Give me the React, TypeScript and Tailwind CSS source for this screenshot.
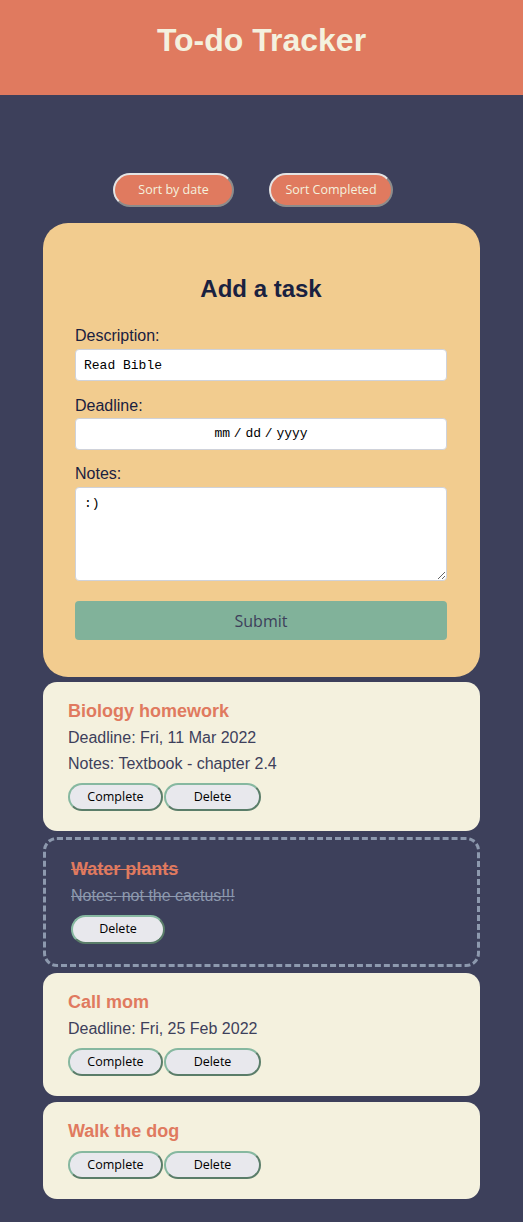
import React from "react";

type Task = {
  title: string;
  deadline?: string;
  notes?: string;
  done?: boolean;
};

const tasks: Task[] = [
  { title: "Biology homework", deadline: "Fri, 11 Mar 2022", notes: "Textbook - chapter 2.4" },
  { title: "Water plants", notes: "not the cactus!!!", done: true },
  { title: "Call mom", deadline: "Fri, 25 Feb 2022" },
  { title: "Walk the dog" },
];

const sans = "font-['Liberation_Sans',Arial,sans-serif]";
const ui = "font-['Open_Sans','Noto_Sans',sans-serif]";

const TaskButton = ({ label, w }: { label: string; w: string }) => (
  <button
    className={`${ui} ${w} rounded-full bg-[#e8e8ed] text-[12.5px] text-black border-2 border-t-[#86b8a0] border-l-[#86b8a0] border-b-[#5a7d69] border-r-[#5a7d69]`}
  >
    {label}
  </button>
);

const TaskCard = ({ task }: { task: Task }) => {
  if (task.done) {
    return (
      <div className="flex flex-col rounded-[14px] border-[3px] border-dashed border-[#8d99ae] px-[25px] pt-[18px] pb-[20px]">
        <h3 className={`${sans} text-[18px] leading-[22px] font-bold text-[#e07a5f] line-through mb-[3px]`}>
          {task.title}
        </h3>
        {task.notes && (
          <p className={`${sans} text-[16px] leading-[26px] text-[#8d99ae] line-through`}>
            Notes: {task.notes}
          </p>
        )}
        <div className="mt-[6px] flex">
          <TaskButton label="Delete" w="w-[94px] h-[29px]" />
        </div>
      </div>
    );
  }
  return (
    <div className="flex flex-col rounded-[14px] bg-[#f4f1de] px-[25px] pt-[18px] pb-[20px]">
      <h3 className={`${sans} text-[18px] leading-[22px] font-bold text-[#e07a5f] mb-[3px]`}>
        {task.title}
      </h3>
      {task.deadline && (
        <p className={`${sans} text-[16px] leading-[26px] text-[#3d405b]`}>
          Deadline: {task.deadline}
        </p>
      )}
      {task.notes && (
        <p className={`${sans} text-[16px] leading-[26px] text-[#3d405b]`}>
          Notes: {task.notes}
        </p>
      )}
      <div className="mt-[6px] flex gap-[1px]">
        <TaskButton label="Complete" w="w-[95px] h-[28px]" />
        <TaskButton label="Delete" w="w-[97px] h-[28px]" />
      </div>
    </div>
  );
};

export default function App() {
  return (
    <div className="min-h-[1222px] bg-[#3d405b] pb-[22px]">
      <header className="h-[95px] bg-[#e07a5f] flex justify-center pt-[21px]">
        <h1 className={`${sans} text-[32px] leading-[38px] font-bold text-[#f4f1de]`}>To-do Tracker</h1>
      </header>

      <div className="flex justify-center gap-[35px] pr-[17px] mt-[78px]">
        <button
          className={`${ui} w-[121px] h-[34px] rounded-full bg-[#e07a5f] text-[12.5px] text-[#f4f1de] border-2 border-t-[#e4e4e4] border-l-[#e4e4e4] border-b-[#8c8c8c] border-r-[#8c8c8c]`}
        >
          Sort by date
        </button>
        <button
          className={`${ui} w-[124px] h-[34px] rounded-full bg-[#e07a5f] text-[12.5px] text-[#f4f1de] border-2 border-t-[#e4e4e4] border-l-[#e4e4e4] border-b-[#8c8c8c] border-r-[#8c8c8c]`}
        >
          Sort Completed
        </button>
      </div>

      <div className="mx-[43px] mt-[16px] flex flex-col gap-[6px]">
        <form className="rounded-[25px] bg-[#f2cc8f] pl-[32px] pr-[33px] pt-[52px] pb-[37px] mb-[-1px]">
          <h2 className={`${sans} text-center text-[24px] leading-[28px] font-bold text-[#1a2140]`}>Add a task</h2>

          <label className={`${sans} block mt-[24px] text-[16px] leading-[18px] text-[#1a2140]`}>Description:</label>
          <input
            readOnly
            value="Read Bible"
            className="mt-[4px] block w-full h-[32px] rounded-[4px] border border-[#cfd2da] bg-white px-[8px] font-['Liberation_Mono',monospace] text-[13px] text-black outline-none"
          />

          <label className={`${sans} block mt-[16px] text-[16px] leading-[18px] text-[#1a2140]`}>Deadline:</label>
          <div className="mt-[3px] flex items-center justify-center w-full h-[32px] rounded-[4px] border border-[#cfd2da] bg-white font-['Liberation_Mono',monospace] text-[13px] text-black [word-spacing:-4px]">
            mm / dd / yyyy
          </div>

          <label className={`${sans} block mt-[15px] text-[16px] leading-[18px] text-[#1a2140]`}>Notes:</label>
          <textarea
            readOnly
            value=":)"
            className="mt-[4px] block w-full h-[94px] rounded-[4px] border border-[#cfd2da] bg-white px-[8px] py-[6px] font-['Liberation_Mono',monospace] text-[13px] text-black outline-none"
          />

          <button
            type="button"
            className={`${ui} mt-[20px] block w-full h-[39px] rounded-[4px] bg-[#81b29a] text-[16px] text-[#3d405b]`}
          >
            Submit
          </button>
        </form>

        {tasks.map((t) => (
          <TaskCard key={t.title} task={t} />
        ))}
      </div>
    </div>
  );
}
